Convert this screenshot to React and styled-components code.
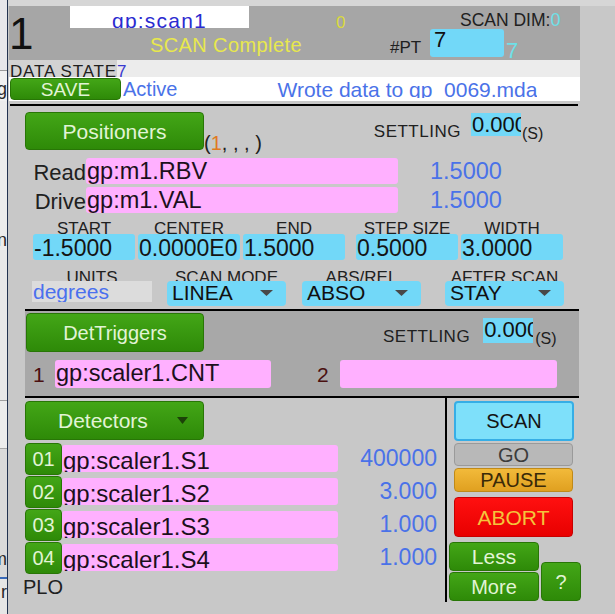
import React from 'react'
import styled, { createGlobalStyle } from 'styled-components'

const GlobalStyle = createGlobalStyle`
  html, body { margin: 0; padding: 0; }
  body {
    width: 615px;
    height: 614px;
    overflow: hidden;
    background: #c8c8c8;
    font-family: "Liberation Sans", Arial, sans-serif;
  }
  * { box-sizing: border-box; }
`

const cyan = '#72d8f8'
const pink = '#ffb0ff'
const blue = '#4a72e8'

const Screen = styled.div`
  display: flex;
  width: 615px;
  height: 614px;
  overflow: hidden;
`

/* window behind, only its right edge shows */
const BackStrip = styled.div`
  width: 8px;
  flex-shrink: 0;
  border-right: 1px solid #22324f;
  display: flex;
  flex-direction: column;
  overflow: hidden;
`
const StripBand = styled.div`
  height: ${p => p.h}px;
  flex-shrink: 0;
  background: ${p => p.bg};
  display: flex;
  justify-content: flex-end;
  align-items: flex-start;
  padding-top: ${p => p.pt || 0}px;
  font-size: 18px;
  line-height: 18px;
  color: #2a2a2a;
  white-space: nowrap;
`

const Main = styled.div`
  width: 607px;
  display: flex;
  flex-direction: column;
`
const TopEdge = styled.div`
  height: 6px;
  background: #d6d6d6;
`

/* ---------- header ---------- */
const Header = styled.div`
  margin-left: 1px;
  width: 571px;
  height: 54px;
  background: #a6a6a6;
  display: flex;
`
const ScanIndex = styled.div`
  width: 61px;
  padding-top: 6px;
  font-size: 44px;
  line-height: 44px;
  color: #111;
`
const NameCol = styled.div`
  width: 260px;
  display: flex;
  flex-direction: column;
`
const NameField = styled.div`
  width: 179px;
  height: 22px;
  padding-top: 4px;
  background: #fff;
  color: #2b2bd0;
  font-size: 21px;
  line-height: 22px;
  letter-spacing: 1.2px;
  text-align: center;
  overflow: hidden;
`
const ScanStatus = styled.div`
  margin: 7px 0 0 80px;
  font-size: 20px;
  line-height: 20px;
  letter-spacing: 0.4px;
  color: #e8e84c;
  white-space: nowrap;
`
const BusyFlag = styled.div`
  width: 60px;
  padding: 8px 0 0 6px;
  font-size: 17px;
  line-height: 17px;
  color: #dada3c;
`
const DimCol = styled.div`
  width: 190px;
  display: flex;
  flex-direction: column;
`
const DimRow = styled.div`
  padding: 5px 0 0 70px;
  height: 23px;
  font-size: 17.5px;
  line-height: 18px;
  color: #202020;
  white-space: nowrap;
`
const Echo = styled.span`
  color: #6ee0e8;
  font-size: 18px;
`
const PtRow = styled.div`
  display: flex;
  height: 28px;
`
const PtLabel = styled.div`
  width: 40px;
  padding-top: 10px;
  font-size: 17px;
  line-height: 17px;
  color: #202020;
`
const PtInput = styled.div`
  width: 74px;
  height: 28px;
  padding: 0 0 0 4px;
  background: ${cyan};
  border-radius: 3px;
  font-size: 22px;
  line-height: 21px;
  color: #101010;
`
const PtEcho = styled.div`
  margin-left: 2px;
  padding-top: 11px;
  font-size: 22px;
  line-height: 22px;
  color: #6ee0e8;
`

/* ---------- data state / message ---------- */
const StateStrip = styled.div`
  margin-left: 1px;
  width: 571px;
  height: 17px;
  background: #ececec;
  display: flex;
  overflow: hidden;
`
const StateLabel = styled.div`
  width: 108px;
  padding: 3px 0 0 1px;
  background: #d2d2d2;
  font-size: 17px;
  line-height: 17px;
  letter-spacing: 0.8px;
  color: #202020;
  white-space: nowrap;
`
const StateValue = styled.div`
  padding-top: 3px;
  font-size: 17px;
  line-height: 17px;
  color: #3a3ad0;
`
const MsgStrip = styled.div`
  margin-left: 1px;
  width: 571px;
  height: 24px;
  background: #fff;
  display: flex;
  align-items: flex-start;
  overflow: hidden;
`
const MsgText = styled.div`
  margin-left: ${p => p.ml}px;
  height: 21px;
  padding-top: 2px;
  font-size: ${p => p.size}px;
  line-height: ${p => p.size}px;
  color: ${blue};
  white-space: nowrap;
  overflow: hidden;
`

const HLine = styled.div`
  margin: ${p => p.mt || 0}px 0 0 ${p => p.ml}px;
  width: ${p => p.w}px;
  height: 2px;
  background: #000;
  flex-shrink: 0;
`

/* ---------- buttons ---------- */
const GreenButton = styled.div`
  flex-shrink: 0;
  width: ${p => p.w}px;
  height: ${p => p.h}px;
  margin: ${p => p.m || 0};
  display: flex;
  align-items: center;
  justify-content: ${p => (p.menu ? 'flex-start' : 'center')};
  padding-left: ${p => (p.menu ? 32 : 0)}px;
  gap: 29px;
  background: linear-gradient(#43a617, #2e8a08);
  border: 1px solid #287606;
  border-radius: 4px;
  color: #e2f4d6;
  font-size: ${p => p.size || 20}px;
  line-height: 1;
  white-space: nowrap;
`
const CtrlButton = styled.div`
  width: ${p => p.w || 119}px;
  height: ${p => p.h}px;
  margin: ${p => p.m};
  display: flex;
  align-items: center;
  justify-content: center;
  background: ${p => p.bg};
  border: ${p => p.bw || 1}px solid ${p => p.bc};
  border-radius: 4px;
  color: ${p => p.fg};
  font-size: ${p => p.size || 20}px;
  line-height: 1;
`

/* ---------- positioners ---------- */
const PosHead = styled.div`
  display: flex;
  align-items: flex-start;
  margin-top: 6px;
  padding-left: 17px;
  height: 38px;
`
const AxisList = styled.div`
  margin-top: 21px;
  font-size: 20px;
  line-height: 20px;
  color: #202020;
  white-space: nowrap;
  span { color: #e07a20; }
`
const SettleLabel = styled.div`
  margin: ${p => p.mt}px 0 0 ${p => p.ml}px;
  font-size: 17px;
  line-height: 17px;
  letter-spacing: 0.5px;
  color: #202020;
`
const SettleInput = styled.div`
  margin: ${p => p.mt}px 0 0 ${p => p.ml}px;
  width: 50px;
  height: ${p => p.h}px;
  padding-left: 1px;
  background: ${cyan};
  font-size: 22px;
  line-height: 23px;
  color: #101010;
  overflow: hidden;
  white-space: nowrap;
`
const Unit = styled.div`
  margin: ${p => p.mt}px 0 0 ${p => p.ml}px;
  font-size: 16px;
  line-height: 16px;
  color: #202020;
`
const PvRow = styled.div`
  display: flex;
  margin-top: ${p => p.mt}px;
  padding-left: 17px;
  height: 26px;
`
const PvLabel = styled.div`
  width: 61px;
  padding-top: 2px;
  text-align: right;
  font-size: 22px;
  line-height: 26px;
  color: #202020;
`
const PinkField = styled.div`
  flex-shrink: 0;
  width: ${p => p.w}px;
  height: ${p => p.h}px;
  margin-top: ${p => p.mt || 0}px;
  padding: ${p => p.pt || 2}px 0 0 1px;
  background: ${pink};
  border-radius: 3px;
  font-size: ${p => p.size || 23}px;
  line-height: 23px;
  color: #1c101c;
  overflow: hidden;
  white-space: nowrap;
`
const PvValue = styled.div`
  margin-left: 32px;
  padding-top: 2px;
  font-size: 23.5px;
  line-height: 22px;
  color: ${blue};
`
const ParamRow = styled.div`
  display: flex;
  margin-top: ${p => p.mt}px;
  padding-left: ${p => p.pl}px;
`
const ParamGroup = styled.div`
  display: flex;
  flex-direction: column;
  width: ${p => p.w}px;
  margin-left: ${p => p.ml || 0}px;
`
const ParamLabel = styled.div`
  height: ${p => p.h}px;
  font-size: 17px;
  line-height: 18px;
  text-align: center;
  color: #202020;
  white-space: nowrap;
`
const NumField = styled.div`
  height: 26px;
  padding: 3px 0 0 1px;
  background: ${cyan};
  border-radius: 3px;
  font-size: 23px;
  line-height: 23px;
  color: #141414;
  overflow: hidden;
  white-space: nowrap;
`
const UnitsField = styled.div`
  height: 21px;
  padding-left: 1px;
  background: #dcdcdc;
  font-size: 21px;
  line-height: 21px;
  color: #4a70ee;
  overflow: hidden;
`
const Dropdown = styled.div`
  height: 25px;
  padding: 1px 13px 0 5px;
  display: flex;
  justify-content: space-between;
  align-items: flex-start;
  background: ${cyan};
  border-radius: 4px;
  font-size: 21px;
  line-height: 21px;
  color: #101010;
  svg { margin-top: 8px; }
`

/* ---------- det triggers ---------- */
const TrigPanel = styled.div`
  margin-left: 17px;
  width: 554px;
  height: 85px;
  background: #a8a8a8;
  display: flex;
  flex-direction: column;
`
const TrigHead = styled.div`
  display: flex;
  align-items: flex-start;
  height: 41px;
`
const TrigRow = styled.div`
  display: flex;
  margin-top: 8px;
  height: 28px;
`
const TrigNum = styled.div`
  width: ${p => p.w}px;
  margin-left: ${p => p.ml}px;
  padding-top: 4px;
  font-size: 21px;
  line-height: 21px;
  color: #4a1010;
`

/* ---------- detectors + controls ---------- */
const Bottom = styled.div`
  display: flex;
  height: 204px;
`
const DetCol = styled.div`
  width: 437px;
  padding-left: 17px;
  display: flex;
  flex-direction: column;
`
const DetRow = styled.div`
  display: flex;
  align-items: flex-start;
  height: 33px;
`
const DetValue = styled.div`
  width: 99px;
  padding-top: 4px;
  text-align: right;
  font-size: 23px;
  line-height: 23px;
  color: ${blue};
`
const PlotLabel = styled.div`
  margin: 3px 0 0 -2px;
  font-size: 20px;
  line-height: 19px;
  color: #202020;
`
const VLine = styled.div`
  width: 2px;
  background: #000;
`
const CtrlCol = styled.div`
  width: 134px;
  display: flex;
  flex-direction: column;
`
const MoreRow = styled.div`
  display: flex;
  align-items: flex-end;
  margin: 5px 0 0 2px;
`
const MoreStack = styled.div`
  display: flex;
  flex-direction: column;
  gap: 1px;
`

const Caret = ({ color = '#484848', w = 13, h = 6 }) => (
  <svg width={w} height={h} viewBox="0 0 13 6" preserveAspectRatio="none">
    <polygon points="0,0 13,0 6.5,6" fill={color} />
  </svg>
)

const params = [
  { label: 'START', value: '-1.5000', ml: 0 },
  { label: 'CENTER', value: '0.0000E0', ml: 3 },
  { label: 'END', value: '1.5000', ml: 3 },
  { label: 'STEP SIZE', value: '0.5000', ml: 11 },
  { label: 'WIDTH', value: '3.0000', ml: 3 },
]

const modes = [
  { label: 'SCAN MODE', value: 'LINEA', ml: 15 },
  { label: 'ABS/REL', value: 'ABSO', ml: 16 },
  { label: 'AFTER SCAN', value: 'STAY', ml: 24 },
]

const detectors = [
  { n: '01', pv: 'gp:scaler1.S1', value: '400000' },
  { n: '02', pv: 'gp:scaler1.S2', value: '3.000' },
  { n: '03', pv: 'gp:scaler1.S3', value: '1.000' },
  { n: '04', pv: 'gp:scaler1.S4', value: '1.000' },
]

export default function App() {
  return (
    <>
      <GlobalStyle />
      <Screen>
        <BackStrip>
          <StripBand h={70} bg="#e6e6ea" />
          <StripBand h={1} bg="#9a9a9a" />
          <StripBand h={30} bg="#f0f0f0" pt={9}>g</StripBand>
          <StripBand h={129} bg="#ececec" />
          <StripBand h={20} bg="#ececec" pt={1}>n</StripBand>
          <StripBand h={150} bg="#e8e8e8" />
          <StripBand h={1} bg="#a0a0a0" />
          <StripBand h={47} bg="#ececec" />
          <StripBand h={1} bg="#a8a8a8" />
          <StripBand h={128} bg="#dadada" pt={101}>m</StripBand>
          <StripBand h={2} bg="#3a6ab8" />
          <StripBand h={35} bg="#e6e6e6" pt={4}>r</StripBand>
        </BackStrip>

        <Main>
          <TopEdge />
          <Header>
            <ScanIndex>1</ScanIndex>
            <NameCol>
              <NameField>gp:scan1</NameField>
              <ScanStatus>SCAN Complete</ScanStatus>
            </NameCol>
            <BusyFlag>0</BusyFlag>
            <DimCol>
              <DimRow>SCAN DIM:<Echo>0</Echo></DimRow>
              <PtRow>
                <PtLabel>#PT</PtLabel>
                <PtInput>7</PtInput>
                <PtEcho>7</PtEcho>
              </PtRow>
            </DimCol>
          </Header>

          <StateStrip>
            <StateLabel>DATA STATE</StateLabel>
            <StateValue>7</StateValue>
          </StateStrip>
          <MsgStrip>
            <GreenButton w={111} h={22} m="1px 0 0 1px" size={19}>SAVE</GreenButton>
            <MsgText ml={2} size={20}>Active</MsgText>
            <MsgText ml={100} size={21}>Wrote data to gp_0069.mda</MsgText>
          </MsgStrip>
          <HLine mt={3} ml={2} w={568} />

          <PosHead>
            <GreenButton w={179} h={38} size={21}>Positioners</GreenButton>
            <AxisList>(<span>1</span>, , , )</AxisList>
            <SettleLabel mt={11} ml={112}>SETTLING</SettleLabel>
            <SettleInput mt={1} ml={10} h={23}>0.000</SettleInput>
            <Unit mt={14} ml={1}>(S)</Unit>
          </PosHead>
          <PvRow mt={8}>
            <PvLabel>Read</PvLabel>
            <PinkField w={312} h={26} size={23.5}>gp:m1.RBV</PinkField>
            <PvValue>1.5000</PvValue>
          </PvRow>
          <PvRow mt={3}>
            <PvLabel>Drive</PvLabel>
            <PinkField w={312} h={26} size={23.5}>gp:m1.VAL</PinkField>
            <PvValue>1.5000</PvValue>
          </PvRow>

          <ParamRow mt={7} pl={25}>
            {params.map(p => (
              <ParamGroup key={p.label} w={102} ml={p.ml}>
                <ParamLabel h={14}>{p.label}</ParamLabel>
                <NumField>{p.value}</NumField>
              </ParamGroup>
            ))}
          </ParamRow>

          <ParamRow mt={9} pl={24}>
            <ParamGroup w={120}>
              <ParamLabel h={12}>UNITS</ParamLabel>
              <UnitsField>degrees</UnitsField>
            </ParamGroup>
            {modes.map(m => (
              <ParamGroup key={m.label} w={119} ml={m.ml}>
                <ParamLabel h={12}>{m.label}</ParamLabel>
                <Dropdown>
                  <span>{m.value}</span>
                  <Caret />
                </Dropdown>
              </ParamGroup>
            ))}
          </ParamRow>

          <HLine mt={3} ml={17} w={554} />
          <TrigPanel>
            <TrigHead>
              <GreenButton w={178} h={39} m="2px 0 0 1px">DetTriggers</GreenButton>
              <SettleLabel mt={17} ml={179}>SETTLING</SettleLabel>
              <SettleInput mt={7} ml={13} h={25}>0.000</SettleInput>
              <Unit mt={20} ml={2}>(S)</Unit>
            </TrigHead>
            <TrigRow>
              <TrigNum w={22} ml={8}>1</TrigNum>
              <PinkField w={216} h={28} size={23.5}>gp:scaler1.CNT</PinkField>
              <TrigNum w={23} ml={46}>2</TrigNum>
              <PinkField w={217} h={28} />
            </TrigRow>
          </TrigPanel>
          <HLine ml={17} w={554} />

          <Bottom>
            <DetCol>
              <GreenButton w={179} h={39} m="3px 0 3px 0" size={21} menu>
                <span>Detectors</span>
                <Caret color="#1c4208" w={11} h={7} />
              </GreenButton>
              {detectors.map(d => (
                <DetRow key={d.n}>
                  <GreenButton w={37} h={32}>{d.n}</GreenButton>
                  <PinkField w={276} h={27} mt={2} pt={4} size={24}>{d.pv}</PinkField>
                  <DetValue>{d.value}</DetValue>
                </DetRow>
              ))}
              <PlotLabel>PLO</PlotLabel>
            </DetCol>
            <VLine />
            <CtrlCol>
              <CtrlButton w={120} h={40} m="3px 0 0 7px" bg="#7ee0fa" bc="#36aee6" bw={2} fg="#141414">SCAN</CtrlButton>
              <CtrlButton h={23} m="2px 0 0 7px" bg="#b8b8b8" bc="#9a9a9a" fg="#3c3c3c">GO</CtrlButton>
              <CtrlButton h={24} m="2px 0 0 7px" bg="linear-gradient(#f2ba3a, #e0a020)" bc="#c08a18" fg="#3a2a08">PAUSE</CtrlButton>
              <CtrlButton h={40} m="5px 0 0 7px" bg="linear-gradient(#ff1010, #e80000)" bc="#c80000" fg="#f4c43c" size={21}>ABORT</CtrlButton>
              <MoreRow>
                <MoreStack>
                  <GreenButton w={90} h={29} size={21}>Less</GreenButton>
                  <GreenButton w={90} h={29}>More</GreenButton>
                </MoreStack>
                <GreenButton w={40} h={39} m="0 0 0 2px">?</GreenButton>
              </MoreRow>
            </CtrlCol>
          </Bottom>
        </Main>
      </Screen>
    </>
  )
}
